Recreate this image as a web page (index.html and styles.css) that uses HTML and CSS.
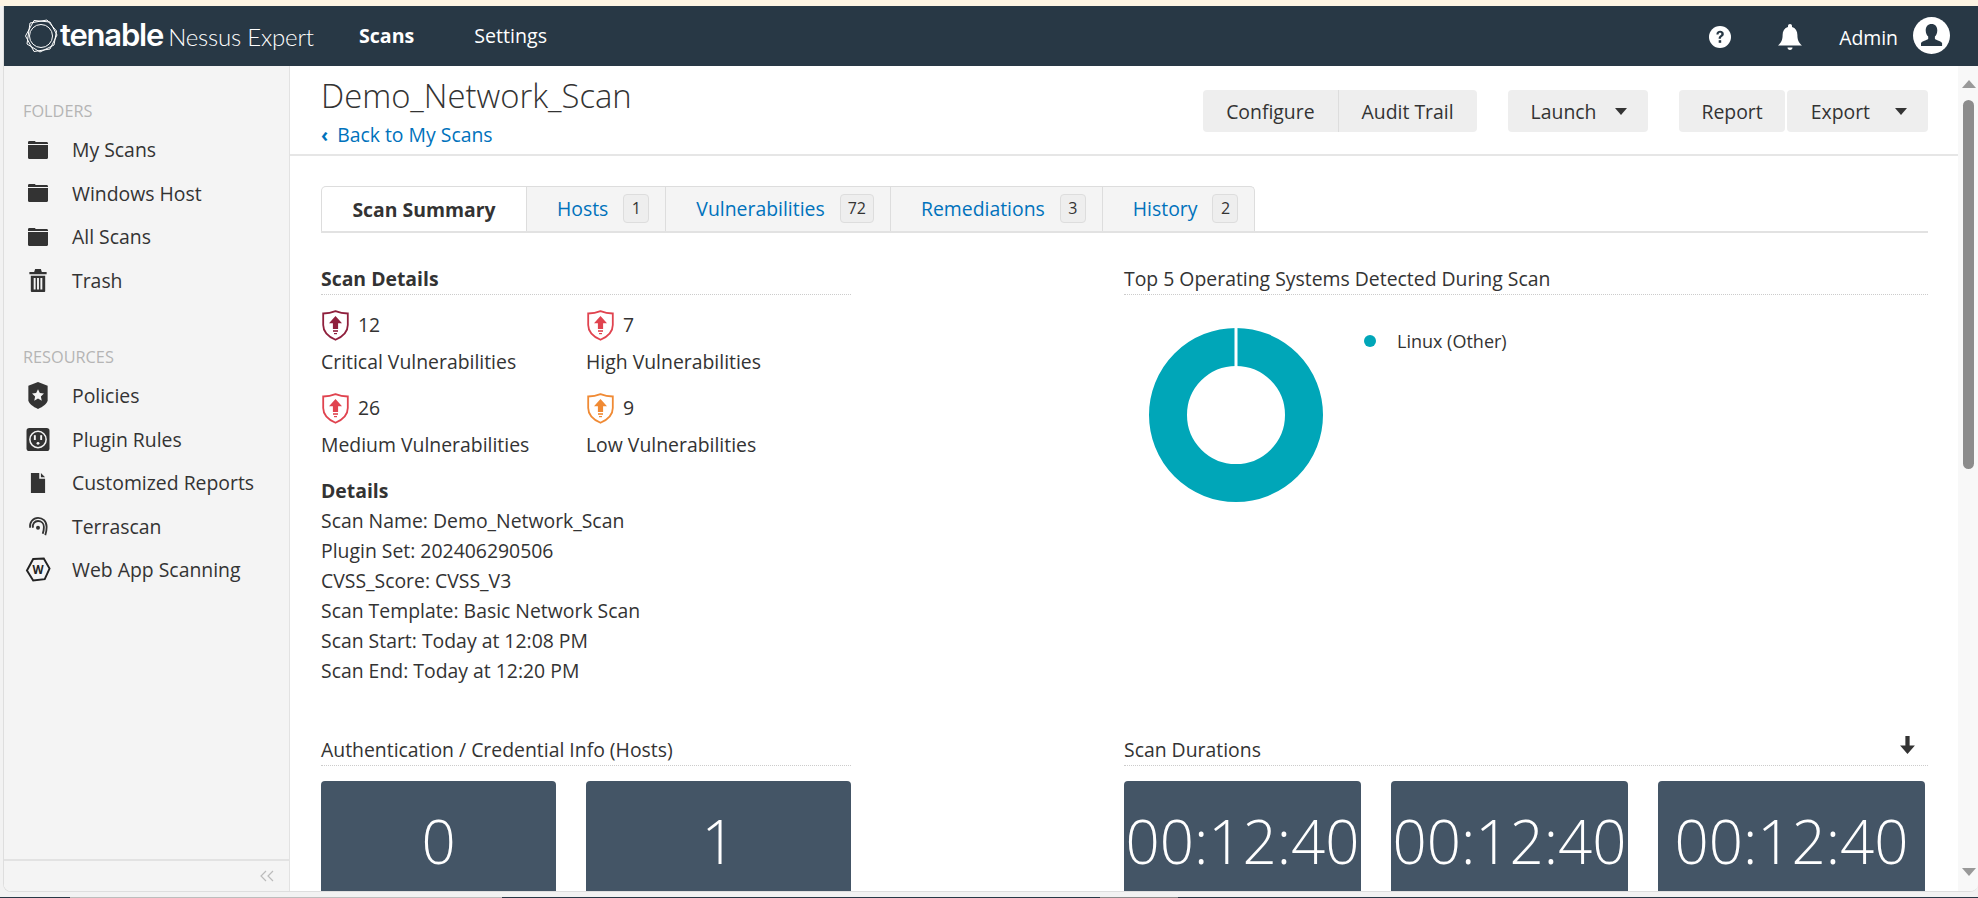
FILE: index.html
```html
<!DOCTYPE html>
<html lang="en">
<head>
    <meta charset="UTF-8">
    <meta name="viewport" content="width=device-width, initial-scale=1.0">
    <title>Demo_Network_Scan</title>
    <link rel="stylesheet" href="styles.css">
</head>
<body>
    <div class="window">
        <header class="topbar">
            <div class="logo">
                <svg class="logo-mark" viewBox="0 0 34 34" fill="none" stroke="#fff" stroke-width="1">
                    <polygon points="10,1.5 26,3 33,16 26,30 10,32.5 1.5,17"/>
                    <polygon points="6,4 23,1 32.5,12 30,26 16,33 3,25"/>
                    <circle cx="17" cy="17" r="11.5"/>
                </svg>
                <span class="logo-name">tenable</span>
                <span class="logo-product">Nessus Expert</span>
            </div>
            <nav class="topnav">
                <a class="topnav-link active">Scans</a>
                <a class="topnav-link">Settings</a>
            </nav>
            <div class="topbar-right">
                <svg class="top-icon" viewBox="0 0 24 24" width="24" height="24">
                    <circle cx="12" cy="12" r="11" fill="#fff"/>
                    <path d="M8.4 9.4c0-2.2 1.6-3.6 3.8-3.6 2.1 0 3.6 1.3 3.6 3.1 0 1.4-.8 2.2-1.8 2.9-.8.6-1.1 1-1.1 1.9h-2.3c0-1.6.5-2.3 1.6-3.2.8-.6 1.2-1 1.2-1.6 0-.7-.6-1.2-1.4-1.2-.9 0-1.4.6-1.5 1.7z" fill="#283845"/>
                    <rect x="10.7" y="15.2" width="2.5" height="2.6" fill="#283845"/>
                </svg>
                <svg class="top-icon bell" viewBox="0 0 26 28" width="26" height="28">
                    <path d="M13 1c1.2 0 2 .8 2 2v1c3.6 1 5.400 4 5.400 8 0 5 1.300 7.500 4.600 10.500H1C4.300 19.500 5.600 17 5.600 12c0-4 1.800-7 5.400-8V3c0-1.200.8-2 2-2z" fill="#fff"/>
                    <path d="M10.500 24.500h5c0 1.500-1 2.500-2.500 2.500s-2.500-1-2.500-2.500z" fill="#fff"/>
                </svg>
                <span class="admin-name">Admin</span>
                <svg class="avatar" viewBox="0 0 37 37" width="37" height="37">
                    <circle cx="18.500" cy="18.500" r="18.500" fill="#fff"/>
                    <path d="M18.500 7c3.700 0 5.800 2.700 5.800 6.300 0 2.700-1 5-2.400 6.300v2.200c0 1.200 5.800 2 7.200 4.200V29H8v-3c1.400-2.200 7.200-3 7.200-4.200v-2.200c-1.400-1.300-2.500-3.600-2.500-6.300C12.700 9.700 14.800 7 18.500 7z" fill="#283845"/>
                </svg>
            </div>
        </header>

        <div class="body-row">
            <aside class="sidebar">
                <div class="sidebar-scroll">
                    <div class="side-label">FOLDERS</div>
                    <a class="side-item">
                        <svg class="side-icon" width="30" height="18" viewBox="0 2 20 18"><path d="M0 3.500C0 2.700.5 2 1.300 2h5c.7 0 1.200.5 1.400 1.100h10.900c.8 0 1.400.6 1.400 1.400V5H0zM0 6h20v12.500c0 .8-.6 1.500-1.400 1.500H1.400C.6 20 0 19.300 0 18.500z"/></svg>
                        My Scans
                    </a>
                    <a class="side-item">
                        <svg class="side-icon" width="30" height="18" viewBox="0 2 20 18"><path d="M0 3.500C0 2.700.5 2 1.300 2h5c.7 0 1.200.5 1.400 1.100h10.900c.8 0 1.400.6 1.400 1.400V5H0zM0 6h20v12.500c0 .8-.6 1.500-1.400 1.500H1.400C.6 20 0 19.300 0 18.500z"/></svg>
                        Windows Host
                    </a>
                    <a class="side-item">
                        <svg class="side-icon" width="30" height="18" viewBox="0 2 20 18"><path d="M0 3.500C0 2.700.5 2 1.300 2h5c.7 0 1.200.5 1.400 1.100h10.900c.8 0 1.400.6 1.400 1.400V5H0zM0 6h20v12.500c0 .8-.6 1.500-1.400 1.500H1.400C.6 20 0 19.300 0 18.500z"/></svg>
                        All Scans
                    </a>
                    <a class="side-item">
                        <svg class="side-icon" width="30" height="23" viewBox="1 0 18 24"><path d="M7 0h6l1 3h5v2.500H1V3h5zM2.500 7h15v16c0 .6-.4 1-1 1h-13c-.6 0-1-.4-1-1zm3 2.500v12h2v-12zm3.500 0v12h2v-12zm3.500 0v12h2v-12z"/></svg>
                        Trash
                    </a>

                    <div class="side-label second">RESOURCES</div>
                    <a class="side-item">
                        <svg class="side-icon" width="30" height="27" viewBox="1 0 20 28"><path d="M11 0l10 4v15c0 3-5 7-10 9C6 26 1 22 1 19V4z"/><path d="M11 7.500l1.900 4 4.300.5-3.200 3 .9 4.400-3.900-2.200-3.900 2.200.9-4.400-3.200-3 4.300-.5z" fill="#f4f4f4"/></svg>
                        Policies
                    </a>
                    <a class="side-item">
                        <svg class="side-icon" width="30" height="23" viewBox="0 0 24 24"><rect width="24" height="24" rx="3"/><circle cx="12" cy="12" r="8.500" fill="none" stroke="#f4f4f4" stroke-width="1.600"/><rect x="7.700" y="7.500" width="2" height="5" fill="#f4f4f4"/><rect x="14.300" y="7.500" width="2" height="5" fill="#f4f4f4"/><circle cx="12" cy="16" r="1.500" fill="#f4f4f4"/></svg>
                        Plugin Rules
                    </a>
                    <a class="side-item">
                        <svg class="side-icon" width="30" height="20" viewBox="2 0 17 24"><path d="M2 0h10v7h7v17H2zM14 0l5 5h-5z"/></svg>
                        Customized Reports
                    </a>
                    <a class="side-item">
                        <svg class="side-icon" width="30" height="20" viewBox="0 0 22 22"><g fill="none" stroke="#333" stroke-width="2"><path d="M2.500 13C1 7 6 2 11 2s9.500 3.500 9.500 10c0 3-.5 6-1.500 9"/><path d="M5.500 13C4.500 8.500 7.500 5.500 11 5.500s6.500 2.500 6.500 6.500c0 2.500-.4 5-1.300 7.500"/></g><circle cx="11" cy="13" r="2.200"/></svg>
                        Terrascan
                    </a>
                    <a class="side-item">
                        <svg class="side-icon" width="30" height="25" viewBox="0 0 26 26"><polygon points="8,2 19,1.500 25,12 20,23 8,24.500 1.500,14" fill="none" stroke="#222" stroke-width="2"/><text x="13" y="17.500" text-anchor="middle" class="wasfont">W</text></svg>
                        Web App Scanning
                    </a>
                </div>
                <div class="sidebar-foot">
                    <svg viewBox="0 0 16 12" width="16" height="12" fill="none" stroke="#bbb" stroke-width="1.200"><path d="M7 1L2 6l5 5M14 1L9 6l5 5"/></svg>
                </div>
            </aside>

            <main class="content">
                <div class="page-head">
                    <div>
                        <h1 class="page-title">Demo_Network_Scan</h1>
                        <a class="back-link"><span class="back-chev">&#8249;</span>Back to My Scans</a>
                    </div>
                    <div class="actions">
                        <div class="btn-group">
                            <a class="btn">Configure</a>
                            <a class="btn">Audit Trail</a>
                        </div>
                        <a class="btn drop launch">Launch<span class="caret"></span></a>
                        <div class="pair">
                            <a class="btn report">Report</a>
                            <a class="btn drop export">Export<span class="caret"></span></a>
                        </div>
                    </div>
                </div>

                <div class="page-body">
                    <div class="tabs">
                        <a class="tab current">Scan Summary</a>
                        <a class="tab">Hosts<span class="count">1</span></a>
                        <a class="tab">Vulnerabilities<span class="count">72</span></a>
                        <a class="tab">Remediations<span class="count">3</span></a>
                        <a class="tab">History<span class="count">2</span></a>
                    </div>

                    <div class="summary">
                        <section class="col-left">
                            <h3 class="sec-title bold">Scan Details</h3>
                            <div class="vuln-grid">
                                <div class="vuln">
                                    <div class="vuln-top">
                                        <svg class="shield" viewBox="0 0 27 31" style="color:#8f1f3c"><use href="#shield"/></svg>
                                        <span>12</span>
                                    </div>
                                    Critical Vulnerabilities
                                </div>
                                <div class="vuln">
                                    <div class="vuln-top">
                                        <svg class="shield" viewBox="0 0 27 31" style="color:#e0434f"><use href="#shield"/></svg>
                                        <span>7</span>
                                    </div>
                                    High Vulnerabilities
                                </div>
                                <div class="vuln">
                                    <div class="vuln-top">
                                        <svg class="shield" viewBox="0 0 27 31" style="color:#e0434f"><use href="#shield"/></svg>
                                        <span>26</span>
                                    </div>
                                    Medium Vulnerabilities
                                </div>
                                <div class="vuln">
                                    <div class="vuln-top">
                                        <svg class="shield" viewBox="0 0 27 31" style="color:#f08a34"><use href="#shield"/></svg>
                                        <span>9</span>
                                    </div>
                                    Low Vulnerabilities
                                </div>
                            </div>
                            <h4 class="details-title">Details</h4>
                            <ul class="details">
                                <li>Scan Name: Demo_Network_Scan</li>
                                <li>Plugin Set: 202406290506</li>
                                <li>CVSS_Score: CVSS_V3</li>
                                <li>Scan Template: Basic Network Scan</li>
                                <li>Scan Start: Today at 12:08 PM</li>
                                <li>Scan End: Today at 12:20 PM</li>
                            </ul>
                        </section>

                        <section class="col-right">
                            <h3 class="sec-title">Top 5 Operating Systems Detected During Scan</h3>
                            <div class="chart-row">
                                <svg class="donut" viewBox="0 0 174 174" width="174" height="174">
                                    <circle cx="87" cy="87" r="68" fill="none" stroke="#00a6b8" stroke-width="38"/>
                                    <rect x="85.500" y="0" width="3" height="39" fill="#fff"/>
                                </svg>
                                <div class="legend"><span class="legend-dot"></span>Linux (Other)</div>
                            </div>
                        </section>

                        <section class="col-left lower">
                            <h3 class="sec-title">Authentication / Credential Info (Hosts)</h3>
                            <div class="tiles auth-tiles">
                                <div class="tile">0</div>
                                <div class="tile">1</div>
                            </div>
                        </section>

                        <section class="col-right lower">
                            <h3 class="sec-title with-icon">Scan Durations
                                <svg viewBox="0 0 14 17" width="15" height="18"><path d="M5 0h4v9h5l-7 8-7-8h5z" fill="#333"/></svg>
                            </h3>
                            <div class="tiles dur-tiles">
                                <div class="tile">00:12:40</div>
                                <div class="tile">00:12:40</div>
                                <div class="tile">00:12:40</div>
                            </div>
                        </section>
                    </div>
                </div>
            </main>

            <div class="scrollbar">
                <span class="arrow-up"></span>
                <span class="thumb"></span>
                <span class="arrow-down"></span>
            </div>
        </div>
    </div>

    <svg class="defs" width="0" height="0">
        <symbol id="shield" viewBox="0 0 27 31">
            <path d="M13.500 1.200C17 2.600 21 3.500 25.800 3.500V15c0 6.800-5 11.600-12.300 14.800C6.200 26.600 1.200 21.800 1.200 15V3.500C6 3.500 10 2.600 13.500 1.200z" fill="none" stroke="currentColor" stroke-width="1.800"/>
            <path d="M13.500 6l6.500 7.200h-3.900v5.800h-5.200v-5.800H7z" fill="currentColor"/>
            <rect x="11" y="20.200" width="5" height="1.600" fill="currentColor"/>
            <rect x="12" y="23" width="3" height="1.200" fill="currentColor"/>
        </symbol>
    </svg>
</body>
</html>
```
FILE: styles.css
```css
* {
    box-sizing: border-box;
}

html, body {
    height: 100%;
}

body {
    margin: 0;
    overflow: hidden;
    background: #f2f2f2;
    font-family: "Open Sans", "Liberation Sans", sans-serif;
    font-size: 19.4px;
    color: #333;
}

.window {
    height: 886px;
    margin-top: 6px;
    margin-left: 3px;
    display: flex;
    flex-direction: column;
    background: #fff;
    border-left: 1px solid #dedede;
    border-bottom: 1px solid #dedede;
    border-bottom-left-radius: 8px;
    border-bottom-right-radius: 8px;
    overflow: hidden;
}

body::before {
    content: "";
    position: fixed;
    top: 0;
    left: 0;
    right: 0;
    height: 6px;
    background: #fdf4e3;
}

body::after {
    content: "";
    position: fixed;
    left: 0;
    right: 0;
    bottom: 0;
    height: 1px;
    background: linear-gradient(90deg, #283845 0 70px, #bdbdbd 70px 502px, #283845 502px 1100px, #8a8a8a 1100px 1178px, #283845 1178px);
}

.defs {
    position: absolute;
}

/* top bar */
.topbar {
    height: 60px;
    flex: none;
    display: flex;
    align-items: center;
    background: #283845;
    color: #fff;
    padding: 0 28px 0 20px;
}

.logo {
    display: flex;
    align-items: center;
    width: 335px;
}

.logo-mark {
    width: 34px;
    height: 34px;
    flex: none;
}

.logo-name {
    font-family: Inter, Roboto, sans-serif;
    font-size: 31px;
    font-weight: 600;
    letter-spacing: -1.2px;
    margin-left: 2px;
    margin-top: -4px;
}

.logo-product {
    font-family: Lato, sans-serif;
    font-size: 24px;
    font-weight: 300;
    margin-left: 5px;
    letter-spacing: -0.2px;
}

.topnav {
    display: flex;
    gap: 60px;
    margin-top: -1px;
}

.topnav-link {
    font-size: 19.6px;
}

.topnav-link.active {
    font-weight: 700;
}

.topbar-right {
    margin-left: auto;
    display: flex;
    align-items: center;
}

.top-icon {
    display: block;
    margin-top: 2px;
}

.bell {
    margin-left: 45px;
    margin-right: 36px;
}

.admin-name {
    margin-top: 3px;
    margin-right: 15px;
}

.avatar {
    display: block;
    margin-top: -1px;
}

.body-row {
    flex: 1;
    display: flex;
    min-height: 0;
}

/* sidebar */
.sidebar {
    width: 286px;
    flex: none;
    display: flex;
    flex-direction: column;
    background: #f4f4f4;
    border-right: 1px solid #e2e2e2;
}

.sidebar-scroll {
    flex: 1;
    padding: 34px 0 0 19px;
}

.side-label {
    font-size: 16.3px;
    line-height: 22px;
    color: #b5b5b5;
    margin-bottom: 6px;
}

.side-label.second {
    margin-top: 44px;
}

.side-item {
    height: 43.500px;
    display: flex;
    align-items: center;
    color: #333;
}

.side-icon {
    margin-right: 19px;
    fill: #333;
    flex: none;
}

.wasfont {
    font-family: "Open Sans", sans-serif;
    font-size: 12px;
    font-weight: 700;
    fill: #222;
}

.sidebar-foot {
    height: 32px;
    flex: none;
    display: flex;
    align-items: center;
    justify-content: flex-end;
    padding-right: 14px;
    border-top: 2px solid #e2e2e2;
}

/* main column */
.content {
    flex: 1;
    min-width: 0;
    overflow: hidden;
}

.page-head {
    height: 90px;
    display: flex;
    justify-content: space-between;
    padding: 0 30px 0 31px;
    border-bottom: 2px solid #e6e6e6;
}

.page-title {
    margin: 8px 0 0;
    font-size: 32.800px;
    line-height: 44px;
    font-weight: 300;
}

.back-link {
    display: block;
    margin-top: 5px;
    line-height: 24px;
    color: #0072bc;
}

.back-chev {
    font-weight: 700;
    margin-right: 9px;
}

.actions {
    display: flex;
    padding-top: 24px;
    gap: 31px;
}

.btn-group, .pair {
    display: flex;
}

.pair {
    gap: 2px;
}

.btn {
    height: 42px;
    display: flex;
    align-items: center;
    padding: 0 23px;
    background: #eee;
    color: #333;
    border-radius: 4px;
}

.btn-group .btn:first-child {
    border-radius: 4px 0 0 4px;
    border-right: 1px solid #ddd;
}

.btn-group .btn:last-child {
    border-radius: 0 4px 4px 0;
}

.report {
    padding: 0 22px;
}

.drop {
    padding-right: 21px;
}

.export {
    padding-left: 24px;
}

.caret {
    width: 0;
    height: 0;
    margin-left: 19px;
    border-left: 6.500px solid transparent;
    border-right: 6.500px solid transparent;
    border-top: 7px solid #333;
}

.export .caret {
    margin-left: 25px;
}

.page-body {
    padding: 30px 30px 0 31px;
}

/* tabs */
.tabs {
    display: flex;
    height: 47px;
    border-bottom: 2px solid #e2e2e2;
}

.tab {
    display: flex;
    align-items: center;
    padding: 0 16px 2px 30px;
    background: #f4f4f4;
    color: #0072bc;
    border: 1px solid #ddd;
    border-left: none;
    border-bottom: none;
}

.tab.current {
    width: 206px;
    padding: 0;
    justify-content: center;
    background: #fff;
    color: #333;
    font-weight: 700;
    border-left: 1px solid #ddd;
    border-radius: 5px 0 0 0;
}

.tab:last-child {
    border-radius: 0 5px 0 0;
}

.count {
    min-width: 26px;
    height: 29px;
    margin-left: 15px;
    padding: 0 7px;
    display: flex;
    align-items: center;
    justify-content: center;
    font-size: 16px;
    color: #333;
    background: #eee;
    border: 1px solid #ddd;
    border-radius: 4px;
}

/* summary grid */
.summary {
    display: grid;
    grid-template-columns: 530px 804px;
    justify-content: space-between;
    padding-top: 34px;
}

.sec-title {
    margin: 0;
    height: 28px;
    font-size: 19.4px;
    line-height: 24px;
    font-weight: 400;
    border-bottom: 1px dotted #ccc;
}

.sec-title.bold {
    font-weight: 700;
}

.with-icon {
    display: flex;
    justify-content: space-between;
    padding-right: 13px;
}

.with-icon svg {
    margin-top: -2px;
}

.vuln-grid {
    display: grid;
    grid-template-columns: 265px 265px;
    margin-top: 15px;
    row-gap: 16px;
}

.vuln {
    line-height: 30px;
}

.vuln-top {
    height: 37px;
    display: flex;
    align-items: flex-start;
}

.vuln-top span {
    margin-left: 9px;
}

.shield {
    width: 27px;
    height: 31px;
    margin-left: 1px;
}

.details-title {
    margin: 16px 0 0;
    font-size: 19.4px;
    line-height: 30px;
    font-weight: 700;
}

.details {
    list-style: none;
    margin: 0;
    padding: 0;
}

.details li {
    line-height: 30px;
}

.chart-row {
    display: flex;
    align-items: flex-start;
    padding: 33px 0 0 25px;
}

.donut {
    display: block;
    flex: none;
}

.legend {
    display: flex;
    align-items: center;
    margin: 1px 0 0 41px;
    font-size: 18px;
    line-height: 24px;
}

.legend-dot {
    width: 12px;
    height: 12px;
    margin-right: 21px;
    background: #00a6b8;
    border-radius: 50%;
}

.lower {
    margin-top: 52px;
}

.tiles {
    display: grid;
    margin-top: 15px;
}

.auth-tiles {
    grid-template-columns: 235px 265px;
    gap: 30px;
}

.dur-tiles {
    grid-template-columns: 237px 237px 267px;
    gap: 30px;
}

.tile {
    height: 140px;
    padding-top: 17px;
    text-align: center;
    font-size: 60px;
    line-height: 86px;
    font-weight: 300;
    color: #fff;
    background: #445566;
    border-radius: 4px;
    white-space: nowrap;
}

/* window scrollbar */
.scrollbar {
    width: 20px;
    flex: none;
    position: relative;
    background: #f8f8f8;
}

.thumb {
    position: absolute;
    top: 34px;
    left: 5px;
    width: 11px;
    height: 369px;
    background: #8c8c8c;
    border-radius: 6px;
}

.arrow-up, .arrow-down {
    position: absolute;
    left: 4px;
    width: 0;
    height: 0;
    border-left: 7px solid transparent;
    border-right: 7px solid transparent;
}

.arrow-up {
    top: 14px;
    border-bottom: 8px solid #999;
}

.arrow-down {
    bottom: 15px;
    border-top: 8px solid #999;
}
```
